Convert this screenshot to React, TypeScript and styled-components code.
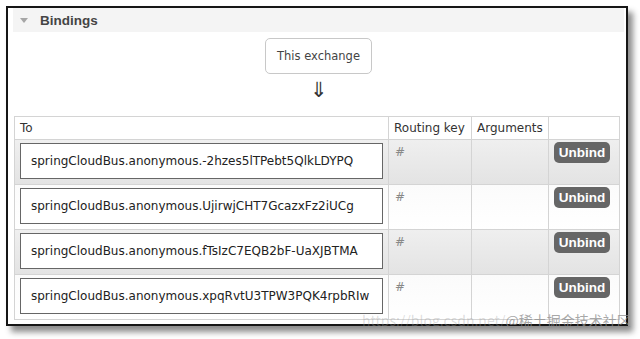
import styled, { createGlobalStyle } from "styled-components";

const GlobalStyle = createGlobalStyle`
  html, body {
    margin: 0;
    padding: 0;
    background: #fff;
  }
  body {
    font-family: "DejaVu Sans", Verdana, sans-serif;
    color: #333;
  }
`;

const bindings = [
  "springCloudBus.anonymous.-2hzes5lTPebt5QlkLDYPQ",
  "springCloudBus.anonymous.UjirwjCHT7GcazxFz2iUCg",
  "springCloudBus.anonymous.fTsIzC7EQB2bF-UaXJBTMA",
  "springCloudBus.anonymous.xpqRvtU3TPW3PQK4rpbRIw",
];

function App() {
  return (
    <Page>
      <GlobalStyle />
      <Frame>
        <SectionHeader>
          <Triangle />
          <h2>Bindings</h2>
        </SectionHeader>

        <Exchange>
          <ExchangeBox>This exchange</ExchangeBox>
          <Arrow>⇓</Arrow>
        </Exchange>

        <Table>
          <colgroup>
            <col style={{ width: 374 }} />
            <col style={{ width: 83 }} />
            <col style={{ width: 77 }} />
            <col />
          </colgroup>
          <thead>
            <tr>
              <Th>To</Th>
              <Th>Routing key</Th>
              <Th>Arguments</Th>
              <Th />
            </tr>
          </thead>
          <tbody>
            {bindings.map((name, i) => (
              <Row key={name} $alt={i % 2 === 0}>
                <Td>
                  <NameBox>{name}</NameBox>
                </Td>
                <KeyCell>#</KeyCell>
                <Td />
                <ButtonCell>
                  <UnbindButton>Unbind</UnbindButton>
                </ButtonCell>
              </Row>
            ))}
          </tbody>
        </Table>
      </Frame>
      <Watermark>
        <span>https://blog.csdn.net/</span>@稀土掘金技术社区
      </Watermark>
    </Page>
  );
}

export default App;

const Page = styled.div`
  position: relative;
  width: 640px;
  height: 339px;
  padding: 6px 0 0 6px;
  box-sizing: border-box;
`;

const Frame = styled.div`
  width: 622px;
  height: 320px;
  box-sizing: border-box;
  border: 2px solid #161616;
  box-shadow: 5px 6px 6px rgba(0, 0, 0, 0.45);
  padding: 0 2px 0 5px;
  background: #fff;
  overflow: hidden;
`;

const SectionHeader = styled.div`
  height: 24px;
  background: #f4f4f4;
  display: flex;
  align-items: center;
  padding-left: 7px;

  & h2 {
    margin: 0 0 0 12px;
    font-family: "Liberation Sans", Arial, sans-serif;
    font-size: 13.5px;
    font-weight: 700;
    color: #444;
  }
`;

const Triangle = styled.span`
  width: 0;
  height: 0;
  border-left: 4.5px solid transparent;
  border-right: 4.5px solid transparent;
  border-top: 5px solid #a6a6a6;
  margin-top: 1px;
`;

const Exchange = styled.div`
  display: flex;
  flex-direction: column;
  align-items: center;
  padding-top: 6px;
  height: 84px;
  box-sizing: border-box;
`;

const ExchangeBox = styled.div`
  width: 107px;
  height: 36px;
  box-sizing: border-box;
  border: 1px solid #c8c8c8;
  border-radius: 5px;
  display: flex;
  align-items: center;
  justify-content: center;
  font-size: 11.5px;
  color: #444;
`;

const Arrow = styled.div`
  font-size: 21px;
  line-height: 24px;
  margin-top: 4px;
  color: #333;
`;

const Table = styled.table`
  width: 606px;
  margin-left: 1px;
  border-collapse: collapse;
  table-layout: fixed;
  border: 1px solid #cfcfcf;
  font-size: 12px;
`;

const Th = styled.th`
  height: 23px;
  box-sizing: border-box;
  padding: 0 5px;
  text-align: left;
  font-weight: 400;
  color: #333;
  border: 1px solid #d4d4d4;
  background: #fff;
  white-space: nowrap;
`;

const Row = styled.tr<{ $alt: boolean }>`
  height: 45px;
  background: ${({ $alt }) =>
    $alt
      ? "linear-gradient(to bottom, #efefef, #e3e3e3)"
      : "linear-gradient(to bottom, #fbfbfb, #ffffff)"};
`;

const Td = styled.td`
  border: 1px solid #d4d4d4;
  vertical-align: top;
  padding: 3px 5px 0 5px;
`;

const KeyCell = styled(Td)`
  color: #888;
  padding: 5px 6px 0;
`;

const ButtonCell = styled(Td)`
  padding: 2px 5px 0;
`;

const NameBox = styled.div`
  height: 36px;
  box-sizing: border-box;
  border: 1px solid #666;
  background: #fff;
  display: flex;
  align-items: center;
  padding-left: 10px;
  font-size: 12px;
  color: #222;
  white-space: nowrap;
  overflow: hidden;
`;

const UnbindButton = styled.button`
  width: 56px;
  height: 21px;
  border: none;
  border-radius: 5px;
  background: #666;
  color: #fff;
  font-family: "Liberation Sans", Arial, sans-serif;
  font-size: 13.5px;
  font-weight: 700;
  padding: 0;
  cursor: pointer;
`;

const Watermark = styled.div`
  position: absolute;
  left: 362px;
  top: 312px;
  font-family: "Noto Sans CJK SC", "DejaVu Sans", sans-serif;
  font-size: 14px;
  line-height: 16px;
  color: rgba(140, 140, 140, 0.75);
  white-space: nowrap;
  pointer-events: none;

  & span {
    color: rgba(160, 160, 160, 0.35);
  }
`;
